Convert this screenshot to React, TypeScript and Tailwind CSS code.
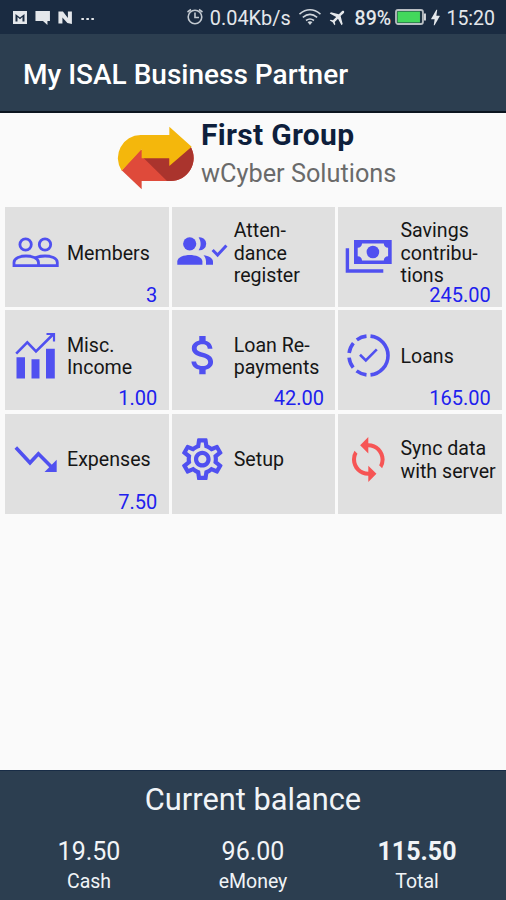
import React from 'react';
import { MdAirplanemodeActive, MdAttachMoney, MdBolt, MdOutlineSettings, MdSync } from 'react-icons/md';

interface MenuItem {
  id: string;
  lines: string[];
  value?: string;
  icon: React.ReactNode;
}

const MembersIcon = () => (
  <g fill="none" stroke="#5050f0" strokeWidth="2.8">
    <circle cx="20.6" cy="37.5" r="5.7" />
    <circle cx="40" cy="37.5" r="5.7" />
    <path d="M9 58.6V55.5C9 51 15.5 49 21 49C26.5 49 33.5 51 33.5 55.5V58.6H9Z" />
    <path d="M30 50.8C33 49.6 36.5 49 40 49C46 49 52.3 51 52.3 55.5V58.6H33" />
  </g>
);

const AttendanceIcon = () => (
  <g fill="#5050f0">
    <circle cx="17.7" cy="36.8" r="6.6" />
    <path d="M26.6 30.4A6.5 6.5 0 1 1 26.6 43.2C29.3 39.5 29.3 34.2 26.6 30.4Z" />
    <path d="M5.3 57.8V54.5C5.3 50 12.5 48 17.8 48C23.2 48 30.4 50 30.4 54.5V57.8Z" />
    <path d="M31.5 48.3C36.5 49 41 51 41 54.8V57.8H34V54.5C34 52 33 50 31.5 48.3Z" />
    <path d="M40.6 43L45.6 48L54.4 38.4" fill="none" stroke="#5050f0" strokeWidth="3" />
  </g>
);

const SavingsIcon = () => (
  <g fill="#5050f0">
    <path
      fillRule="evenodd"
      d="M16 33H53.7V57H16ZM24 36.6C24 39 22.2 40.8 19.7 40.8V49.2C22.2 49.2 24 51 24 53.4H45.8C45.8 51 47.6 49.2 50.1 49.2V40.8C47.6 40.8 45.8 39 45.8 36.6Z"
    />
    <circle cx="34.9" cy="45" r="6.3" />
    <path d="M9.4 41.3V64H45.3" fill="none" stroke="#5050f0" strokeWidth="3.4" />
  </g>
);

const IncomeIcon = () => (
  <g fill="#5050f0">
    <path d="M11.2 43.6L22.3 32.3L31 41.5L48.5 24" fill="none" stroke="#5050f0" strokeWidth="2.6" />
    <path d="M41.5 24H49V31.5" fill="none" stroke="#5050f0" strokeWidth="2.2" />
    <path d="M11.5 47.3H20V68.4H11.5ZM26.5 49.3H34.5V68.4H26.5ZM41 38.7H49.8V68.4H41Z" />
  </g>
);

const LoansIcon = () => (
  <g fill="none" stroke="#5050f0" strokeWidth="3.6">
    <path d="M32.5 26.1A19.5 19.5 0 0 1 32.5 64.9" />
    <path d="M28.5 64.9A19.5 19.5 0 0 1 28.5 26.1" strokeDasharray="10.8 4.7" />
    <path d="M22 44.8L27.8 50.4L38.8 39.3" strokeWidth="2.6" />
  </g>
);

const ExpensesIcon = () => (
  <g fill="#5050f0">
    <path d="M10.8 33.6L25 48.8L33.4 39.8L48 54.5" fill="none" stroke="#5050f0" strokeWidth="3.6" />
    <path d="M51.7 45.8V58H39.5Z" />
  </g>
);

const items: MenuItem[] = [
  { id: 'members', lines: ['Members'], value: '3', icon: <MembersIcon /> },
  { id: 'attendance', lines: ['Atten-', 'dance', 'register'], icon: <AttendanceIcon /> },
  { id: 'savings', lines: ['Savings', 'contribu-', 'tions'], value: '245.00', icon: <SavingsIcon /> },
  { id: 'income', lines: ['Misc.', 'Income'], value: '1.00', icon: <IncomeIcon /> },
  {
    id: 'repayments',
    lines: ['Loan Re-', 'payments'],
    value: '42.00',
    icon: <MdAttachMoney x={6} y={19.6} size={51} color="#5050f0" />,
  },
  { id: 'loans', lines: ['Loans'], value: '165.00', icon: <LoansIcon /> },
  { id: 'expenses', lines: ['Expenses'], value: '7.50', icon: <ExpensesIcon /> },
  { id: 'setup', lines: ['Setup'], icon: <MdOutlineSettings x={5.3} y={20.2} size={50} color="#5050f0" /> },
  { id: 'sync', lines: ['Sync data', 'with server'], icon: <MdSync x={5.8} y={21} size={49} color="#f65555" /> },
];

const balances = [
  { label: 'Cash', value: '19.50', bold: false },
  { label: 'eMoney', value: '96.00', bold: false },
  { label: 'Total', value: '115.50', bold: true },
];

const StatusBar = () => (
  <div className="flex h-[34px] items-center bg-[#1a2b41] pl-[13px] pr-[11px] text-[19.5px] text-[#e4e7eb]">
    <svg width="84" height="34" viewBox="0 0 84 34" fill="#e4e7eb">
      <path fillRule="evenodd" d="M0 11H14V24H0ZM2.5 14V21.5H4.5V17L7 19.3L9.5 17V21.5H11.5V14L7 17.5Z" />
      <path d="M22.5 11H37V21H34.5V25L30 21H22.5Z" />
      <path d="M45.5 11.5H50L55 18V11.5H59V24L54.5 23L49.5 17.5V23.5H45.5Z" />
      <path d="M68.5 18H71V20H68.5ZM73.5 18H76V20H73.5ZM78.5 18H81V20H78.5Z" />
    </svg>
    <svg className="ml-[89px]" width="20" height="34" viewBox="0 0 20 34" fill="none" stroke="#c3cad1" strokeWidth="1.6">
      <circle cx="9" cy="17" r="6.8" />
      <path d="M9 12.5V17.5H13M1.5 12L5 9.5M16.5 12L13 9.5" />
    </svg>
    <span className="ml-[4px] w-[83px] whitespace-nowrap pt-[3px] text-[19.9px]">0.04Kb/s</span>
    <svg className="ml-[5px]" width="24" height="34" viewBox="0 0 24 34" fill="none" stroke="#d0d6dc" strokeWidth="1.6">
      <path d="M1.5 14Q12 5.5 22.5 14M4.8 17.3Q12 11.5 19.2 17.3M8 20.5Q12 17.5 16 20.5" />
      <path d="M9.5 22Q12 20.3 14.5 22L12 25Z" fill="#d0d6dc" stroke="none" />
    </svg>
    <MdAirplanemodeActive className="ml-[6px] rotate-45" size={20} />
    <span className="ml-[7px] w-[40px] whitespace-nowrap pt-[3px] text-[19.5px] font-medium">89%</span>
    <svg width="32" height="34" viewBox="0 0 32 34">
      <rect x="1" y="10" width="27" height="14" rx="2" fill="#1f3544" stroke="#b9bec3" strokeWidth="1.8" />
      <rect x="2.5" y="11.5" width="22.5" height="11" fill="#43d85c" />
      <path d="M29 13.5H31V20.5H29Z" fill="#d5d8db" />
    </svg>
    <MdBolt className="-ml-px" size={21} />
    <span className="ml-auto whitespace-nowrap pt-[3px]">15:20</span>
  </div>
);

// two interlocking arrows that form a pill
const Logo = () => (
  <svg width="78" height="64" viewBox="51 48 234 192">
    <path d="M122 118L65 181L125 238V213H212A69 69 0 0 0 272 110L208 145Z" fill="#df4a3a" />
    <path d="M130 143L201 213H212A69 69 0 0 0 272 110L208 165V143Z" fill="#aa342d" />
    <path d="M65 182A69 69 0 0 1 122 75H208V50L275 110L208 168V145H125V118Z" fill="#f4b70c" />
  </svg>
);

const MenuTile: React.FC<{ item: MenuItem }> = ({ item }) => (
  <div className="h-[100px] bg-[#e0e0e0]">
    <div className="flex h-[100px]">
      <svg className="shrink-0" width="62" height="100" viewBox="0 0 62 100">
        {item.icon}
      </svg>
      <div className="flex h-[94px] flex-col justify-center text-[19.6px] leading-[22.7px] text-[#161616]">
        {item.lines.map(line => (
          <span key={line} className="whitespace-nowrap">{line}</span>
        ))}
      </div>
    </div>
    {item.value && (
      <div className="-mt-[24px] pr-[11.5px] text-right text-[20px] leading-[25px] text-[#2020ee]">{item.value}</div>
    )}
  </div>
);

export default function App() {
  return (
    <div className="flex h-[900px] w-[506px] flex-col overflow-hidden bg-[#fafafa] font-[Roboto,sans-serif]">
      <StatusBar />
      <header className="flex h-[79px] items-center border-b-2 border-[#0b1520] bg-[#2c3e50] pl-[23px] pt-[5px]">
        <h1 className="whitespace-nowrap text-[28px] font-medium text-white">My ISAL Business Partner</h1>
      </header>

      <div className="flex h-[94px] pl-[117px] pt-[5px]">
        <div className="pt-[8px]">
          <Logo />
        </div>
        <div className="ml-[6px] whitespace-nowrap">
          <div className="text-[30px] font-bold leading-[34px] tracking-[0.3px] text-[#0e1f3c]">First Group</div>
          <div className="mt-[6px] text-[25.3px] leading-[32px] text-[#6a6a6a]">wCyber Solutions</div>
        </div>
      </div>

      <main className="grid grid-cols-3 gap-x-[3px] gap-y-[3.4px] pl-[5px] pr-[3.8px]">
        {items.map(item => (
          <MenuTile key={item.id} item={item} />
        ))}
      </main>

      <footer className="mt-auto h-[130px] border-t border-[#182c46] bg-[#2c3e50] text-[#f1f4f7]">
        <h2 className="pt-[9px] text-center text-[30.8px] leading-[40px]">Current balance</h2>
        <div className="grid grid-cols-3 px-[7px] pt-[16px] text-center">
          {balances.map(b => (
            <div key={b.label}>
              <div className={b.bold ? 'text-[25px] font-bold leading-[32px]' : 'text-[25px] leading-[32px]'}>{b.value}</div>
              <div className="text-[19.5px] leading-[28px]">{b.label}</div>
            </div>
          ))}
        </div>
      </footer>
    </div>
  );
}
